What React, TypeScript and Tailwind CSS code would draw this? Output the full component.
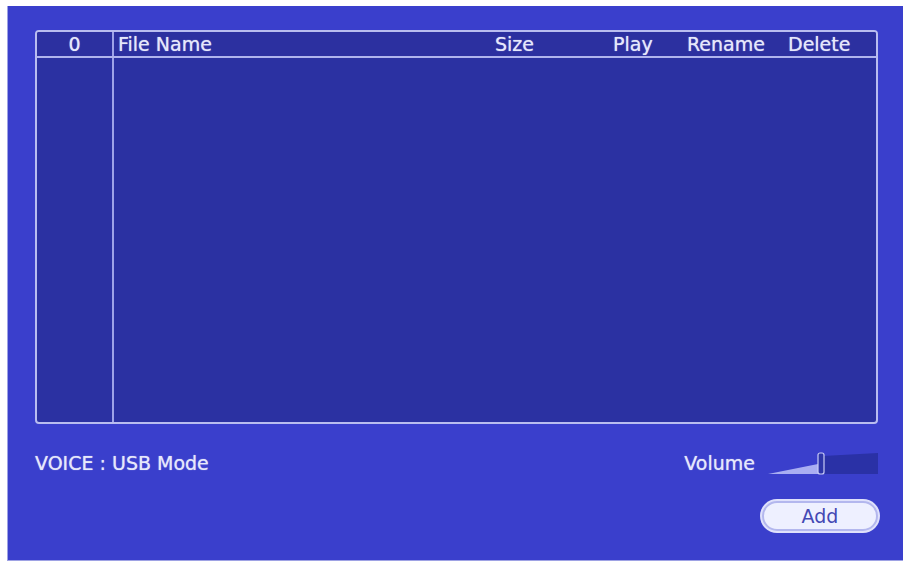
import React from "react";

const font = { fontFamily: '"DejaVu Sans", Verdana, sans-serif' };

// header cells: label + column width, left aligned like the DVR menu
const columns: { label: string; width: string; align: string }[] = [
  { label: "File Name", width: "w-[381px]", align: "pl-[4px]" },
  { label: "Size", width: "w-[118px]", align: "" },
  { label: "Play", width: "w-[74px]", align: "" },
  { label: "Rename", width: "w-[101px]", align: "" },
  { label: "Delete", width: "flex-1", align: "" },
];

function VolumeSlider({ value }: { value: number }) {
  // wedge style slider: light part up to the thumb, dark remainder
  const x = Math.round((value / 100) * 110);
  return (
    <svg width="110" height="23" viewBox="0 0 110 23">
      <polygon points={`${x + 5},4 110,1 110,22 ${x + 5},22`} fill="#2a31a6" />
      <polygon points={`0,22 ${x},12 ${x},22`} fill="#a9aef2" />
      <rect x={x} y="1" width="6" height="21" rx="2" fill="#2d35a8" stroke="#c9ccf6" strokeWidth="1.2" />
    </svg>
  );
}

export default function App() {
  return (
    <div className="w-[903px] h-[562px] bg-white overflow-hidden" style={font}>
      <div className="ml-[7px] mt-[6px] w-[896px] h-[555px] bg-[#3a3fcc] border-l border-b border-[#9ea2e4] pl-[27px] pt-[24px] text-[19px] leading-none text-[#e6e8fb] [text-shadow:0_0_1px_rgba(230,232,251,0.8)]">
        {/* file list */}
        <div className="w-[843px] h-[394px] rounded-[4px] border-2 border-[#b9bdf0] bg-[#2b31a2] flex flex-col overflow-hidden">
          <div className="h-[26px] flex items-center border-b-2 border-[#b0b4ee] bg-[#2c30a0]">
            <div className="w-[77px] h-full flex items-center justify-center border-r-2 border-[#9ea3e8]">0</div>
            {columns.map((c) => (
              <div key={c.label} className={`${c.width} ${c.align} h-full flex items-center`}>
                {c.label}
              </div>
            ))}
          </div>
          <div className="flex-1 flex">
            <div className="w-[77px] h-full border-r-2 border-[#9ea3e8]" />
            <div className="flex-1" />
          </div>
        </div>

        <div className="w-[843px] mt-[27px] h-[24px] flex items-center justify-between">
          <span>VOICE : USB Mode</span>
          <div className="flex items-center gap-[13px]">
            <span>Volume</span>
            <VolumeSlider value={45} />
          </div>
        </div>

        <div className="w-[843px] mt-[26px] flex justify-end">
          <button className="w-[116px] h-[30px] rounded-full bg-[#eef0ff] border-2 border-[#b3b7ee] ring-2 ring-[#dfe1fb] text-[#4348b4] text-[19px] leading-none flex items-center justify-center [text-shadow:none]">
            Add
          </button>
        </div>
      </div>
    </div>
  );
}
